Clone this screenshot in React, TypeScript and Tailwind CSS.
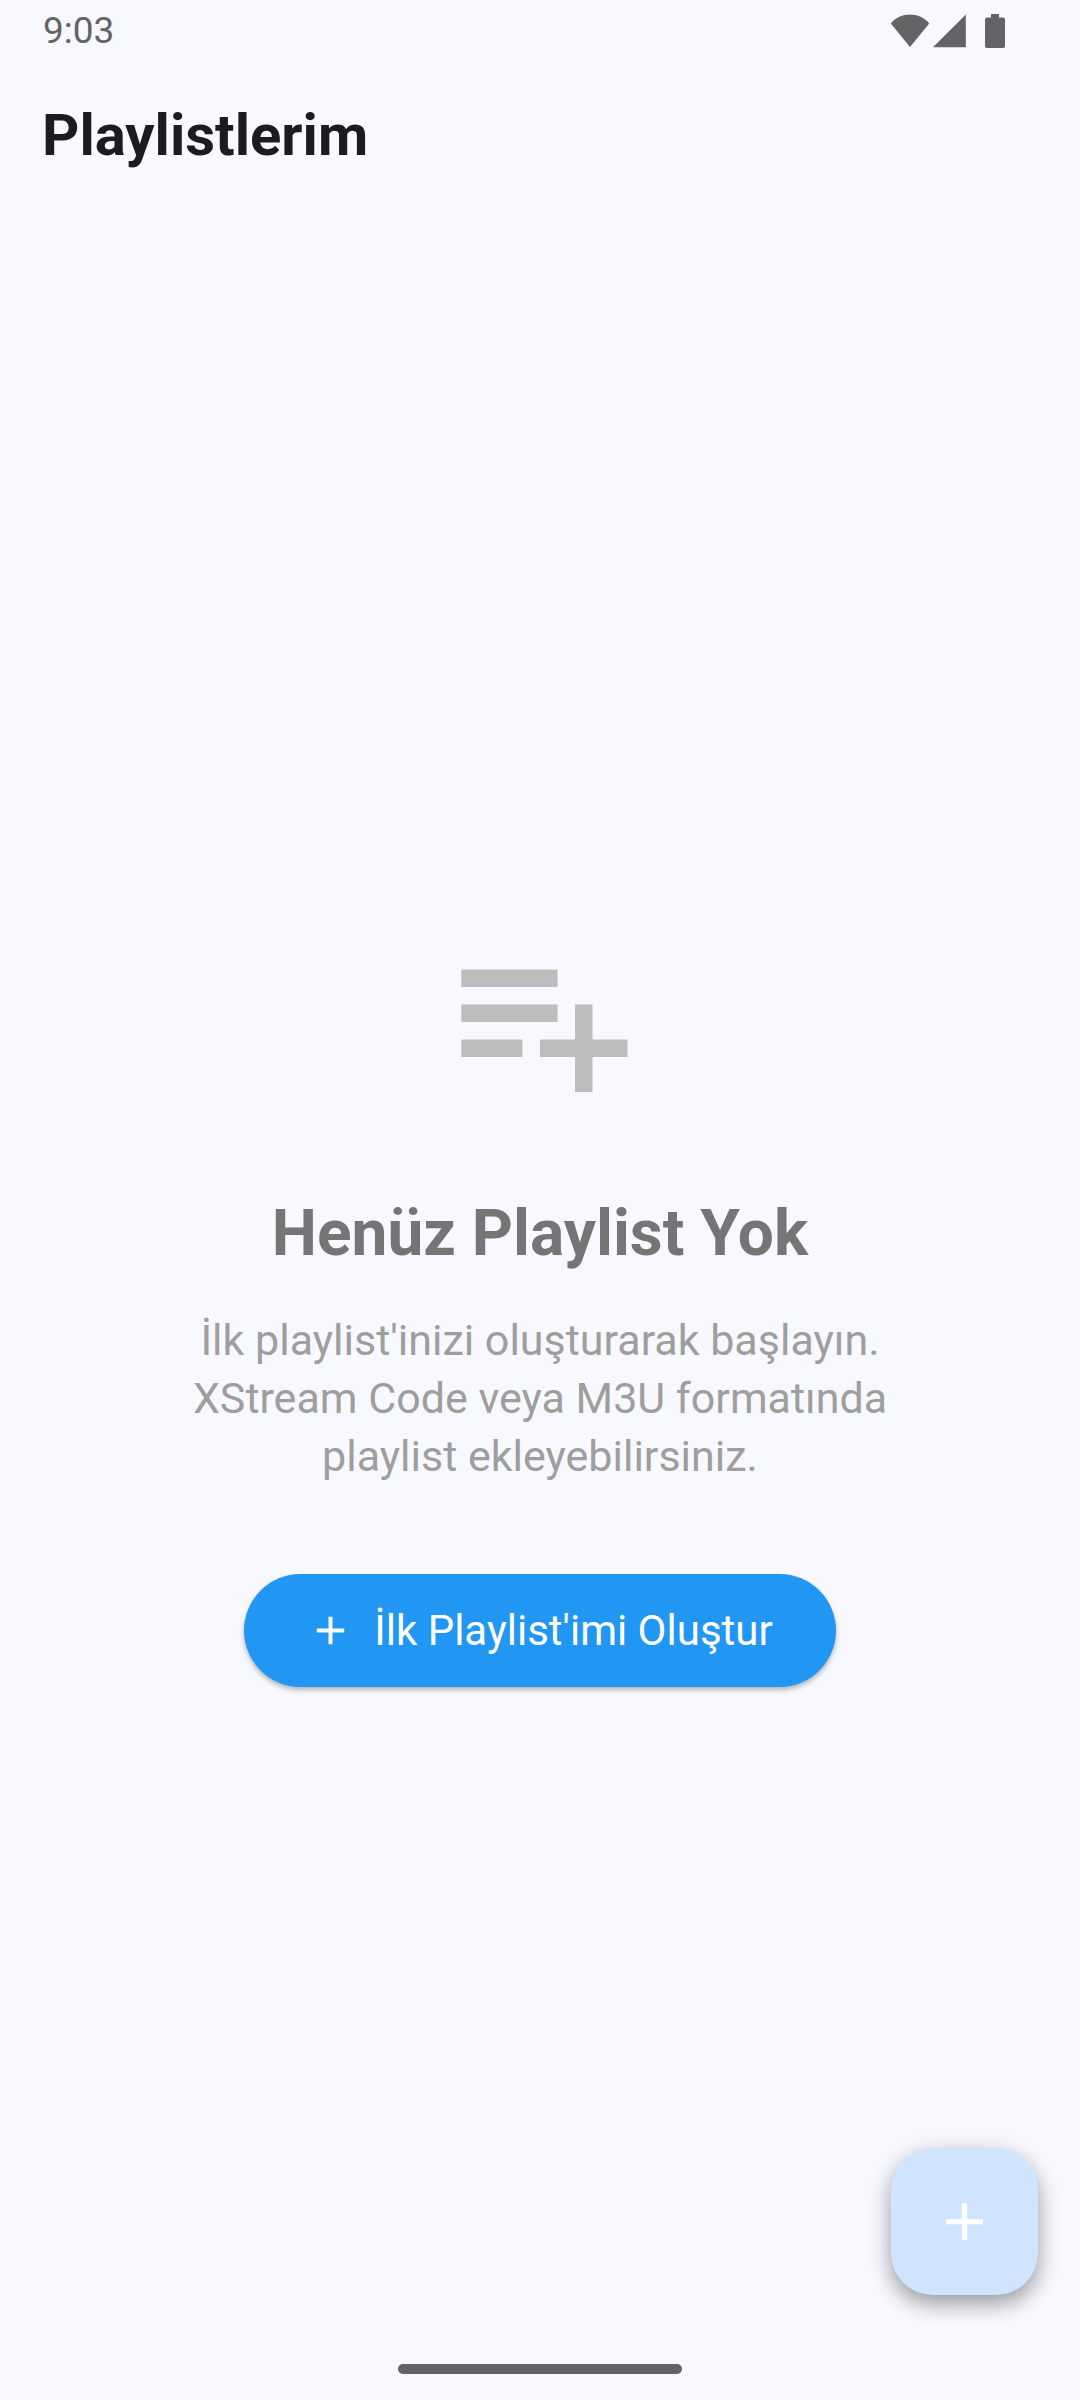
function StatusBar() {
  return (
    <div className="flex h-[61px] w-full items-center justify-between pr-[75px] pl-[43px] text-[#636466]">
      <time className="text-[37px] leading-[44px]">9:03</time>
      <div className="flex items-center gap-[3px]" aria-hidden="true">
        <svg width="40" height="34" viewBox="0 0 40 34" fill="currentColor">
          <path d="M20 33 .8 9.4C5.8 3.500 12.500.5 20 .5S34.200 3.500 39.200 9.400Z" />
        </svg>
        <svg width="34" height="34" viewBox="0 0 34 34" fill="currentColor">
          <path d="M0 33.200 32.800.5V33.200Z" />
        </svg>
        <svg className="ml-[15px]" width="20" height="34" viewBox="0 0 20 34" fill="currentColor">
          <path d="M6 0h8v3.500h4a2 2 0 0 1 2 2V32a2 2 0 0 1-2 2H2a2 2 0 0 1-2-2V5.500a2 2 0 0 1 2-2h4Z" />
        </svg>
      </div>
    </div>
  );
}

function PlusIcon({ className }: { className: string }) {
  return (
    <svg className={className} viewBox="0 0 24 24" fill="currentColor" aria-hidden="true">
      <path d="M19 13h-6v6h-2v-6H5v-2h6V5h2v6h6v2z" />
    </svg>
  );
}

function PlaylistAddIcon() {
  return (
    <svg className="size-[210px] text-[#bdbdbd]" viewBox="0 0 24 24" fill="currentColor" aria-hidden="true">
      <path d="M14 10H3v2h11v-2zm0-4H3v2h11V6zm4 8v-4h-2v4h-4v2h4v4h2v-4h4v-2h-4zM3 16h7v-2H3v2z" />
    </svg>
  );
}

export default function App() {
  return (
    <div className="relative flex min-h-screen flex-col bg-[#f8f9ff] font-[Roboto,sans-serif]">
      <StatusBar />
      <header className="flex h-[149px] items-center px-[42px] pb-[2px]">
        <h1 className="text-[58px] leading-[72px] font-bold text-[#191c20]">Playlistlerim</h1>
      </header>

      <main className="flex flex-1 flex-col items-center justify-center px-[84px] text-center">
        <PlaylistAddIcon />
        <h2 className="mt-[65px] text-[64px] leading-[84px] font-bold text-[#757575]">Henüz Playlist Yok</h2>
        <p className="mt-[35px] text-[43px] leading-[58px] text-[#9e9e9e]">
          İlk playlist'inizi oluşturarak başlayın.
          <br />
          XStream Code veya M3U formatında
          <br />
          playlist ekleyebilirsiniz.
        </p>
        <button
          type="button"
          className="mt-[89px] mb-[6px] flex h-[113px] items-center gap-[20px] rounded-full bg-[#2196f3] px-[63px] text-[42px] leading-[56px] text-white shadow-[0_3px_5px_rgba(0,0,0,0.28)]"
        >
          <PlusIcon className="size-[47px]" />
          İlk Playlist'imi Oluştur
        </button>
      </main>

      <button
        type="button"
        aria-label="Playlist ekle"
        className="absolute right-[42px] bottom-[105px] flex size-[147px] items-center justify-center rounded-[42px] bg-[#d1e4ff] text-white shadow-[0_10px_20px_rgba(0,0,0,0.3),0_4px_28px_rgba(0,0,0,0.1)]"
      >
        <PlusIcon className="size-[63px]" />
      </button>
      <div className="absolute bottom-[26px] left-1/2 h-[10px] w-[284px] -translate-x-1/2 rounded-full bg-[#636466]" />
    </div>
  );
}
